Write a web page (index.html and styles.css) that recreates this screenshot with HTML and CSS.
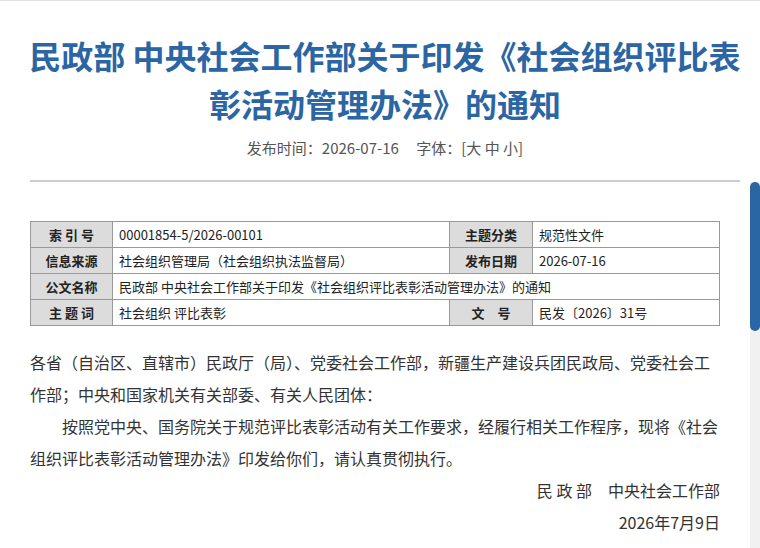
FILE: index.html
```html
<!DOCTYPE html>
<html lang="zh-CN">
<head>
<meta charset="utf-8">
<title>民政部 中央社会工作部关于印发《社会组织评比表彰活动管理办法》的通知</title>
<link rel="stylesheet" href="styles.css">
</head>
<body>
<div class="page">
  <header class="header">
    <h1 class="title">民政部 中央社会工作部关于印发《社会组织评比表彰活动管理办法》的通知</h1>
    <div class="meta">
      <span>发布时间：2026-07-16</span>
      <span class="fontsize">字体：[<a class="fs">大</a> <a class="fs">中</a> <a class="fs">小</a>]</span>
    </div>
    <div class="rule"></div>
  </header>
  <div class="viewport">
    <main class="scroller">
      <table class="info">
        <colgroup>
          <col class="c1"><col class="c2"><col class="c3"><col class="c4">
        </colgroup>
        <tr>
          <th>索 引 号</th><td>00001854-5/2026-00101</td>
          <th>主题分类</th><td>规范性文件</td>
        </tr>
        <tr>
          <th>信息来源</th><td>社会组织管理局（社会组织执法监督局）</td>
          <th>发布日期</th><td>2026-07-16</td>
        </tr>
        <tr>
          <th>公文名称</th><td colspan="3">民政部 中央社会工作部关于印发《社会组织评比表彰活动管理办法》的通知</td>
        </tr>
        <tr>
          <th>主 题 词</th><td>社会组织 评比表彰</td>
          <th>文　号</th><td>民发〔2026〕31号</td>
        </tr>
      </table>
      <article class="body">
        <p>各省（自治区、直辖市）民政厅（局）、党委社会工作部，新疆生产建设兵团民政局、党委社会工作部；中央和国家机关有关部委、有关人民团体：</p>
        <p class="indent">按照党中央、国务院关于规范评比表彰活动有关工作要求，经履行相关工作程序，现将《社会组织评比表彰活动管理办法》印发给你们，请认真贯彻执行。</p>
        <p class="right">民 政 部　中央社会工作部</p>
        <p class="right">2026年7月9日</p>
      </article>
    </main>
    <div class="rail"><div class="thumb"></div></div>
  </div>
</div>
</body>
</html>
```

FILE: styles.css
```css
html, body {
  margin: 0;
  padding: 0;
  background: #fff;
}
body {
  font-family: "Noto Sans CJK SC", "Noto Sans", sans-serif;
  color: #333;
  overflow: hidden;
}
.page {
  height: 548px;
  display: flex;
  flex-direction: column;
  border-top: 1px solid #e2e2e2;
  box-sizing: border-box;
}
.header {
  padding: 0 17px 0 27px;
  flex: none;
}
.title {
  margin: 30px 0 0;
  font-size: 32px;
  line-height: 48px;
  font-weight: 700;
  color: #2b65a3;
  text-align: center;
}
.meta {
  margin-top: 9px;
  font-size: 15px;
  line-height: 24px;
  color: #555;
  text-align: center;
}
.meta .fontsize {
  margin-left: 14px;
}
.fs {
  color: #555;
  cursor: pointer;
}
.rule {
  margin: 20px 3px 0 3px;
  height: 2px;
  background: #cccccc;
}
.viewport {
  flex: 1;
  min-height: 0;
  display: flex;
}
.scroller {
  flex: 1;
  min-width: 0;
  overflow: hidden;
  padding: 39px 30px 0 30px;
}
.rail {
  flex: none;
  width: 10px;
  background: #f1f1f1;
}
.thumb {
  height: 149px;
  background: #2b66a4;
  border-radius: 5px;
}
.info {
  width: 100%;
  border-collapse: collapse;
  table-layout: fixed;
  font-size: 13px;
  color: #222;
}
.info .c1 { width: 82px; }
.info .c2 { width: 337px; }
.info .c3 { width: 83px; }
.info .c4 { width: auto; }
.info th, .info td {
  border: 1px solid #999;
  height: 25px;
  padding: 0 6px;
  line-height: 18px;
  white-space: nowrap;
}
.info th {
  background: #dcdcdc;
  font-weight: 700;
  text-align: center;
  padding: 0;
}
.info td {
  text-align: left;
}
.body {
  margin-top: 20px;
  font-size: 16px;
  line-height: 32px;
  color: #333;
}
.body p {
  margin: 0;
}
.body .indent {
  text-indent: 2em;
}
.body .right {
  text-align: right;
}
```
